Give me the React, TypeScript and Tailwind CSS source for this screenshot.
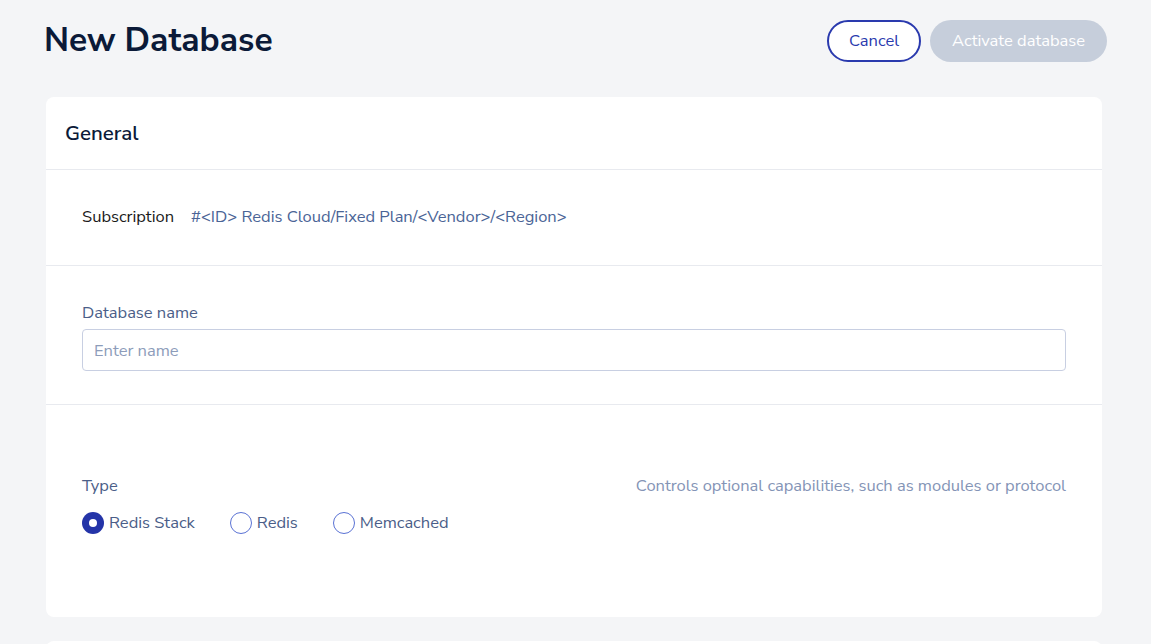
const font = { fontFamily: '"Nunito Sans", Lato, "Open Sans", sans-serif' };

const Radio = ({ label, checked }: { label: string; checked?: boolean }) => (
  <label className="flex items-center gap-[5px] cursor-pointer">
    {checked ? (
      <span className="w-[22px] h-[22px] rounded-full bg-[#2434a8] flex items-center justify-center">
        <span className="w-[8px] h-[8px] rounded-full bg-white" />
      </span>
    ) : (
      <span className="w-[22px] h-[22px] rounded-full border-[1.5px] border-[#5a72d4] bg-white" />
    )}
    <span className="text-[16.5px] text-[#4a5d88]">{label}</span>
  </label>
);

const App = () => {
  return (
    <div className="min-h-[644px] w-full bg-[#f4f5f7] pl-[44px] pr-[44px] pt-[20px]" style={font}>
      <div className="flex items-center justify-between h-[42px]">
        <h1 className="text-[33.5px] font-bold text-[#0b1a38] leading-none">New Database</h1>
        <div className="flex items-center gap-[9px]">
          <button className="h-[42px] px-[20px] rounded-full border-2 border-[#2a3aae] text-[16.5px] text-[#2a3aae] bg-white">
            Cancel
          </button>
          <button className="h-[42px] px-[22px] rounded-full bg-[#c6cedb] text-[16.5px] text-white">
            Activate database
          </button>
        </div>
      </div>

      <div className="mt-[35px] ml-[2px] mr-[5px] bg-white rounded-[8px] overflow-hidden">
        <div className="h-[73px] flex items-center px-[19px] border-b border-[#e8eaef]">
          <h2 className="text-[20.5px] font-semibold text-[#0b1a38]">General</h2>
        </div>

        <div className="h-[96px] flex items-center gap-[17px] px-[36px] border-b border-[#e8eaef]">
          <span className="text-[16.5px] text-[#1a1a1a]">Subscription</span>
          <span className="text-[16.5px] text-[#4a6496]">#&lt;ID&gt; Redis Cloud/Fixed Plan/&lt;Vendor&gt;/&lt;Region&gt;</span>
        </div>

        <div className="px-[36px] pt-[36px] pb-[33px] border-b border-[#e8eaef]">
          <div className="text-[16.5px] leading-[22px] text-[#4b5e88] mb-[5px]">Database name</div>
          <input
            className="w-full h-[42px] rounded-[4px] border border-[#c8cfe2] px-[11px] text-[16.5px] text-[#1a1a1a] placeholder:text-[#8d9cba] outline-none"
            placeholder="Enter name"
          />
        </div>

        <div className="px-[36px] pt-[70px] pb-[81px]">
          <div className="flex items-center justify-between">
            <span className="text-[16.5px] leading-[22px] text-[#4b5e88]">Type</span>
            <span className="text-[16.5px] leading-[22px] text-[#8494b6]">Controls optional capabilities, such as modules or protocol</span>
          </div>
          <div className="flex items-center gap-[35px] mt-[14px]">
            <Radio label="Redis Stack" checked />
            <Radio label="Redis" />
            <Radio label="Memcached" />
          </div>
        </div>
      </div>

      <div className="mt-[24px] ml-[2px] mr-[5px] h-[20px] bg-white rounded-t-[8px]" />
    </div>
  );
};

export default App;
